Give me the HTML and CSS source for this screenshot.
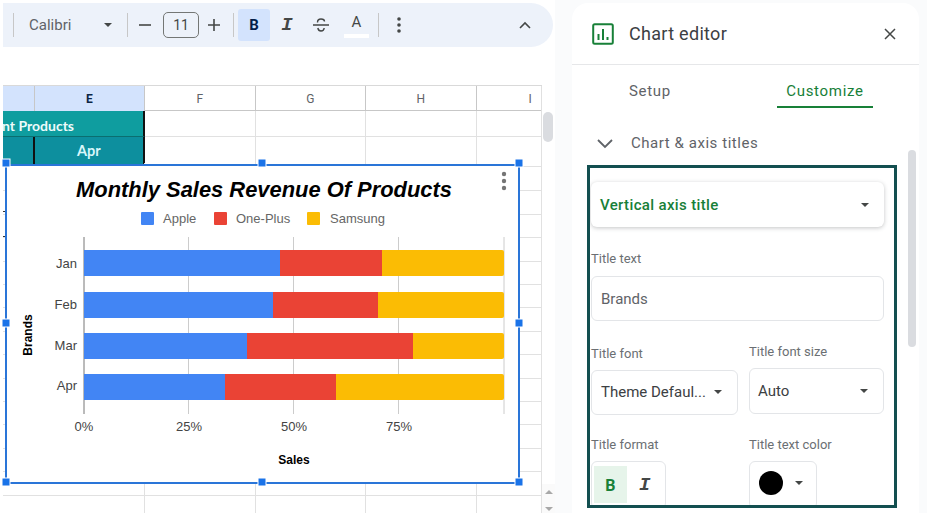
FILE: index.html
```html
<!DOCTYPE html>
<html lang="en">
<head>
  <meta charset="UTF-8">
  <title>Chart editor</title>
  <link rel="stylesheet" href="styles.css">
</head>
<body>
  <div class="sheet">
    <div class="toolbar">
      <span class="tb-sep"></span>
      <div class="tb-font">
        <span>Calibri</span>
        <span class="caret"></span>
      </div>
      <span class="tb-sep"></span>
      <svg class="tb-minus" width="14" height="14" viewBox="0 0 14 14"><path class="tb-line" d="M1 7h12"/></svg>
      <div class="tb-size">11</div>
      <svg class="tb-plus" width="14" height="14" viewBox="0 0 14 14"><path class="tb-line" d="M1 7h12M7 1v12"/></svg>
      <span class="tb-sep tb-sep-b"></span>
      <div class="tb-bold">B</div>
      <div class="tb-italic">I</div>
      <svg class="tb-strike" width="18" height="18" viewBox="0 0 18 18"><path class="tb-line-thin" d="M1 9h16M5.5 6.5C5.5 4 7 3 9 3s3.5 1 3.5 2.5M5.8 12c.4 2 1.6 3 3.2 3s3-1 3.2-3"/></svg>
      <div class="tb-color">A</div>
      <span class="tb-sep tb-sep-c"></span>
      <svg class="tb-dots" width="4" height="16" viewBox="0 0 4 16"><circle cx="2" cy="2" r="1.8"/><circle cx="2" cy="8" r="1.8"/><circle cx="2" cy="14" r="1.8"/></svg>
      <svg class="tb-collapse" width="14" height="9" viewBox="0 0 14 9"><path class="tb-line" d="M2 7l5-5 5 5"/></svg>
    </div>

    <div class="grid-wrap">
      <div class="grid">
        <div class="grid-head">
          <div class="col-d selected"></div>
          <div class="col selected">E</div>
          <div class="col">F</div>
          <div class="col">G</div>
          <div class="col">H</div>
          <div class="col-i">I</div>
        </div>
        <div class="grid-row">
          <div class="merged"><span>nt Products</span></div>
          <div class="cell"></div>
          <div class="cell"></div>
          <div class="cell"></div>
          <div class="cell-i"></div>
        </div>
        <div class="grid-row">
          <div class="teal-d"></div>
          <div class="teal-e">Apr</div>
          <div class="cell"></div>
          <div class="cell"></div>
          <div class="cell"></div>
          <div class="cell-i"></div>
        </div>
        <div class="grid-fill"></div>
      </div>
      <div class="vscroll">
        <div class="vthumb"></div>
        <div class="varrows">
          <span class="arrow-up"></span>
          <span class="arrow-down"></span>
        </div>
      </div>
    </div>

    <!-- chart sits over the cells, svg uses page coordinates -->
    <div class="chart">
      <svg class="chart-svg" width="511" height="316" viewBox="7 166 511 316">
        <text class="c-title" x="264" y="197">Monthly Sales Revenue Of Products</text>

        <rect class="s-blue" x="141" y="212" width="13" height="13" rx="1"/>
        <text class="c-legend" x="163" y="223">Apple</text>
        <rect class="s-red" x="214" y="212" width="13" height="13" rx="1"/>
        <text class="c-legend" x="236" y="223">One-Plus</text>
        <rect class="s-yellow" x="307" y="212" width="13" height="13" rx="1"/>
        <text class="c-legend" x="330" y="223">Samsung</text>

        <path class="c-grid" d="M188.5 237V414M293.5 237V414M398.5 237V414M504 237V414"/>
        <path class="c-axis" d="M84 237V414"/>

        <rect class="s-yellow" x="378" y="250" width="126" height="26" rx="2"/>
        <rect class="s-red" x="280" y="250" width="102" height="26"/>
        <rect class="s-blue" x="84" y="250" width="196" height="26"/>

        <rect class="s-yellow" x="374" y="292" width="130" height="26" rx="2"/>
        <rect class="s-red" x="273" y="292" width="105" height="26"/>
        <rect class="s-blue" x="84" y="292" width="189" height="26"/>

        <rect class="s-yellow" x="408" y="333" width="96" height="26" rx="2"/>
        <rect class="s-red" x="247" y="333" width="166" height="26"/>
        <rect class="s-blue" x="84" y="333" width="163" height="26"/>

        <rect class="s-yellow" x="331" y="374" width="173" height="26" rx="2"/>
        <rect class="s-red" x="225" y="374" width="111" height="26"/>
        <rect class="s-blue" x="84" y="374" width="141" height="26"/>

        <text class="c-label c-end" x="77" y="268">Jan</text>
        <text class="c-label c-end" x="77" y="309">Feb</text>
        <text class="c-label c-end" x="77" y="350">Mar</text>
        <text class="c-label c-end" x="77" y="390">Apr</text>

        <text class="c-label c-mid" x="84" y="431">0%</text>
        <text class="c-label c-mid" x="189" y="431">25%</text>
        <text class="c-label c-mid" x="294" y="431">50%</text>
        <text class="c-label c-mid" x="399" y="431">75%</text>

        <text class="c-axis-title" x="294" y="464">Sales</text>
        <text class="c-axis-title" transform="translate(32 335) rotate(-90)">Brands</text>

        <circle class="c-dot" cx="504" cy="174" r="2.2"/>
        <circle class="c-dot" cx="504" cy="181" r="2.2"/>
        <circle class="c-dot" cx="504" cy="188" r="2.2"/>

        <rect class="c-handle" x="2" y="159" width="8" height="8"/>
        <rect class="c-handle" x="258" y="159" width="8" height="8"/>
        <rect class="c-handle" x="515" y="159" width="8" height="8"/>
        <rect class="c-handle" x="2" y="319" width="8" height="8"/>
        <rect class="c-handle" x="515" y="319" width="8" height="8"/>
        <rect class="c-handle" x="2" y="478" width="8" height="8"/>
        <rect class="c-handle" x="258" y="478" width="8" height="8"/>
        <rect class="c-handle" x="515" y="478" width="8" height="8"/>
      </svg>
    </div>
  </div>

  <div class="panel">
    <div class="panel-head">
      <svg class="panel-icon" width="22" height="22" viewBox="0 0 22 22"><rect class="icon-box" x="1.2" y="1.2" width="19.6" height="19.6" rx="1.5"/><path class="icon-bars" d="M6.5 11v6M11 6v11M15.5 14v3"/></svg>
      <div class="panel-title">Chart editor</div>
      <svg class="panel-close" width="12" height="12" viewBox="0 0 12 12"><path d="M1 1l10 10M11 1L1 11"/></svg>
    </div>
    <div class="tabs">
      <div class="tab">Setup</div>
      <div class="tab active">Customize</div>
    </div>
    <div class="section-head">
      <svg class="section-chevron" width="18" height="11" viewBox="0 0 18 11"><path d="M2 2l7 7 7-7"/></svg>
      <span>Chart &amp; axis titles</span>
    </div>
    <div class="panel-scroll"></div>

    <div class="box">
      <div class="dropdown">
        <span>Vertical axis title</span>
        <span class="caret"></span>
      </div>

      <div class="label label-text">Title text</div>
      <div class="input">Brands</div>

      <div class="row row-font">
        <div class="field field-left">
          <div class="label">Title font</div>
          <div class="select">
            <span>Theme Defaul...</span>
            <span class="caret"></span>
          </div>
        </div>
        <div class="field field-right">
          <div class="label">Title font size</div>
          <div class="select select-size">
            <span>Auto</span>
            <span class="caret"></span>
          </div>
        </div>
      </div>

      <div class="row row-format">
        <div class="field field-left">
          <div class="label">Title format</div>
          <div class="format-group">
            <div class="format-b">B</div>
            <div class="format-i">I</div>
          </div>
        </div>
        <div class="field field-right">
          <div class="label">Title text color</div>
          <div class="color-btn">
            <span class="color-dot"></span>
            <span class="caret"></span>
          </div>
        </div>
      </div>
    </div>
  </div>
</body>
</html>
```

FILE: styles.css
```css
* {
  box-sizing: border-box;
}
html, body {
  margin: 0;
  height: 513px;
  overflow: hidden;
}
body {
  display: flex;
  font-family: Roboto, "Liberation Sans", sans-serif;
  background-color: #fafbfc;
  color: #444746;
}
.caret {
  display: inline-block;
  width: 0;
  height: 0;
  border-left: 4.5px solid transparent;
  border-right: 4.5px solid transparent;
  border-top: 4.5px solid #444746;
}

/* sheet side */
.sheet {
  position: relative;
  width: 555px;
  flex: none;
  background-color: #fff;
}
.toolbar {
  display: flex;
  align-items: center;
  height: 44px;
  margin: 3px 2px 0 3px;
  padding-left: 10px;
  background-color: #edf2fa;
  border-radius: 0 22px 22px 0;
}
.tb-sep {
  width: 1px;
  height: 24px;
  flex: none;
  background-color: #c7c7c7;
}
.tb-font {
  display: flex;
  align-items: center;
  justify-content: space-between;
  width: 113px;
  padding: 0 15px 0 15px;
  font-size: 15px;
  color: #5f6368;
}
.tb-line {
  fill: none;
  stroke: #444746;
  stroke-width: 1.6;
}
.tb-line-thin {
  fill: none;
  stroke: #444746;
  stroke-width: 1.4;
}
.tb-minus {
  margin-left: 10px;
}
.tb-size {
  width: 36px;
  height: 26px;
  margin-left: 11px;
  border: 1px solid #747775;
  border-radius: 5px;
  font-size: 14px;
  line-height: 24px;
  text-align: center;
}
.tb-plus {
  margin-left: 8px;
}
.tb-sep-b {
  margin-left: 12px;
}
.tb-bold {
  width: 32px;
  height: 32px;
  margin-left: 4px;
  background-color: #d3e3fd;
  border-radius: 3px;
  font-size: 15px;
  font-weight: 700;
  line-height: 32px;
  text-align: center;
  color: #041e49;
}
.tb-italic, .format-i {
  font-family: "Liberation Mono", monospace;
  font-style: italic;
  font-weight: 700;
  text-align: center;
}
.tb-italic {
  width: 18px;
  margin-left: 8px;
  font-size: 19px;
}
.tb-strike {
  margin-left: 16px;
}
.tb-color {
  width: 25px;
  height: 26px;
  margin-left: 14px;
  border-bottom: 4px solid #fff;
  font-size: 15px;
  line-height: 20px;
  text-align: center;
}
.tb-sep-c {
  margin-left: 9px;
}
.tb-dots {
  margin-left: 18px;
  fill: #444746;
}
.tb-collapse {
  margin-left: 117px;
}

/* cells */
.grid-wrap {
  display: flex;
  height: 428px;
  margin-top: 38px;
}
.grid {
  width: 542px;
  padding-left: 3px;
  overflow: hidden;
}
.grid-head, .grid-row {
  display: grid;
  grid-template-columns: 31.5px 110.5px 110.5px 110.5px 110.5px 65.5px;
  height: 26px;
}
.grid-head {
  border-top: 1px solid #d9d9d9;
  border-bottom: 1px solid #c7c7c7;
  font-size: 12px;
  line-height: 26px;
  text-align: center;
  color: #5f6368;
}
.col {
  border-right: 1px solid #c7c7c7;
}
.col-d {
  border-right: 1px solid #c7c7c7;
}
.col-i {
  padding-left: 43px;
  border-right: 1px solid #e0e0e0;
}
.selected {
  background-color: #d3e3fd;
  font-weight: 700;
  color: #0b2545;
}
.cell {
  border-right: 1px solid #e1e1e1;
  border-bottom: 1px solid #e1e1e1;
}
.cell-i {
  border-right: 1px solid #e1e1e1;
  border-bottom: 1px solid #e1e1e1;
}
.merged {
  grid-column: span 2;
  display: flex;
  justify-content: flex-end;
  padding-right: 69px;
  background-color: #0f9d9f;
  border-right: 2px solid #111;
  border-bottom: 1px solid #0b6e70;
  font-family: Lato, sans-serif;
  font-size: 14px;
  font-weight: 700;
  line-height: 30px;
  white-space: nowrap;
  overflow: hidden;
  color: #eefbfb;
}
.teal-d, .teal-e {
  background-color: #0d8f9e;
  border-right: 2px solid #111;
  border-bottom: 2px solid #111;
}
.teal-e {
  font-family: Lato, sans-serif;
  font-size: 14.5px;
  font-weight: 700;
  line-height: 28px;
  text-align: center;
  color: #d8f6fa;
}
.grid-fill {
  position: relative;
  height: 350px;
  background-image:
    linear-gradient(#e1e1e1, #e1e1e1),
    linear-gradient(#e1e1e1, #e1e1e1),
    linear-gradient(#e1e1e1, #e1e1e1),
    linear-gradient(#e1e1e1, #e1e1e1),
    linear-gradient(#e1e1e1, #e1e1e1),
    repeating-linear-gradient(#fff 0, #fff 22.4px, #e1e1e1 22.4px, #e1e1e1 23.4px);
  background-size: 1px 100%, 1px 100%, 1px 100%, 1px 100%, 1px 100%, 100% 100%;
  background-position: 141px 0, 252px 0, 362px 0, 473px 0, 538px 0, 0 5px;
  background-repeat: no-repeat;
}
.grid-fill::before {
  content: "";
  position: absolute;
  left: 0;
  top: 24px;
  width: 3px;
  height: 51px;
  background-image: repeating-linear-gradient(transparent 0, transparent 24px, #333 24px, #333 25px);
}

.vscroll {
  display: flex;
  flex-direction: column;
  width: 13px;
  padding-top: 27px;
}
.vthumb {
  width: 10px;
  height: 30px;
  margin-left: 1px;
  background-color: #dadce0;
  border-radius: 5px;
}
.varrows {
  display: flex;
  flex-direction: column;
  align-items: center;
  gap: 13px;
  height: 29px;
  margin-top: auto;
  padding-top: 6px;
  background-color: #fafafa;
}
.arrow-up, .arrow-down {
  width: 0;
  height: 0;
  border-left: 4px solid transparent;
  border-right: 4px solid transparent;
}
.arrow-up {
  border-bottom: 4px solid #a8a8a8;
}
.arrow-down {
  border-top: 4px solid #a8a8a8;
}

/* chart */
.chart {
  position: absolute;
  left: 5px;
  top: 164px;
  width: 515px;
  height: 320px;
  background-color: #fff;
  border: 2px solid #2a75d8;
}
.chart-svg {
  display: block;
  overflow: visible;
  font-family: "Liberation Sans", Arial, sans-serif;
}
.c-title {
  font-size: 21.9px;
  font-weight: 700;
  font-style: italic;
  text-anchor: middle;
  fill: #000;
}
.c-legend {
  font-size: 13px;
  fill: #666;
}
.c-label {
  font-size: 13px;
  fill: #444;
}
.c-end {
  text-anchor: end;
}
.c-mid {
  text-anchor: middle;
}
.c-axis-title {
  font-size: 12px;
  font-weight: 700;
  text-anchor: middle;
  fill: #000;
}
.c-grid {
  fill: none;
  stroke: #ccc;
  stroke-width: 1;
}
.c-axis {
  fill: none;
  stroke: #777;
  stroke-width: 1;
}
.s-blue {
  fill: #4285f4;
}
.s-red {
  fill: #ea4335;
}
.s-yellow {
  fill: #fbbc04;
}
.c-dot {
  fill: #757575;
}
.c-handle {
  fill: #1a73e8;
  stroke: #fff;
  stroke-width: 1;
}

/* chart editor */
.panel {
  position: relative;
  width: 347px;
  height: 510px;
  margin: 3px 0 0 17px;
  flex: none;
  background-color: #fff;
  border-radius: 16px 16px 0 0;
}
.panel-head {
  display: flex;
  align-items: center;
  height: 62px;
  padding: 1px 23px 1px 20px;
  border-bottom: 1px solid #e6e7e9;
}
.panel-icon {
  flex: none;
}
.icon-box {
  fill: none;
  stroke: #188038;
  stroke-width: 2;
}
.icon-bars {
  fill: none;
  stroke: #188038;
  stroke-width: 2;
}
.panel-title {
  margin-left: 15px;
  font-size: 18px;
  letter-spacing: 0.3px;
  color: #3c4043;
}
.panel-close {
  margin-left: auto;
  fill: none;
  stroke: #444746;
  stroke-width: 1.5;
}
.tabs {
  display: flex;
  height: 43px;
  padding-left: 57px;
}
.tab {
  padding-top: 17px;
  font-size: 15px;
  letter-spacing: 0.7px;
  color: #5f6368;
}
.tab.active {
  width: 96px;
  height: 43px;
  margin-left: 106px;
  border-bottom: 2px solid #188038;
  text-align: center;
  color: #188038;
}
.section-head {
  display: flex;
  align-items: center;
  height: 57px;
  padding: 13px 0 0 24px;
  font-size: 15px;
  letter-spacing: 0.55px;
  color: #5f6368;
}
.section-head span {
  margin-left: 17px;
}
.section-chevron {
  fill: none;
  stroke: #5f6368;
  stroke-width: 1.8;
}
.panel-scroll {
  position: absolute;
  left: 336px;
  top: 147px;
  width: 8px;
  height: 197px;
  background-color: #dadce0;
  border-radius: 4px;
}
.box {
  width: 310px;
  height: 343px;
  margin-left: 15px;
  padding: 14px 10px 0 1px;
  border: 3px solid #134f50;
  overflow: hidden;
}
.dropdown {
  display: flex;
  align-items: center;
  justify-content: space-between;
  height: 45px;
  padding: 0 15px 0 9px;
  background-color: #fff;
  border-radius: 6px;
  box-shadow: 0 1px 4px rgba(60, 64, 67, 0.3);
  font-size: 15px;
  font-weight: 500;
  letter-spacing: 0.35px;
  color: #188038;
}
.label {
  height: 16px;
  font-size: 13px;
  line-height: 18px;
  color: #6b6f73;
}
.label-text {
  margin-top: 23px;
}
.input {
  height: 45px;
  margin-top: 10px;
  padding-left: 9px;
  border: 1px solid #e3e5e8;
  border-radius: 6px;
  font-size: 15px;
  line-height: 45px;
  color: #5f6368;
}
.row {
  display: flex;
  gap: 11px;
}
.row-font {
  margin-top: 22px;
}
.row-format {
  margin-top: 21px;
}
.field-left {
  width: 147px;
  flex: none;
}
.field-right {
  width: 135px;
  flex: none;
}
.row-font .field-left {
  padding-top: 2px;
}
.select {
  display: flex;
  align-items: center;
  justify-content: space-between;
  height: 45px;
  margin-top: 9px;
  padding: 0 15px 1px 9px;
  border: 1px solid #e3e5e8;
  border-radius: 6px;
  font-size: 15px;
  color: #3c4043;
}
.select-size {
  height: 46px;
  padding-left: 8px;
  padding-right: 15px;
}
.format-group {
  display: flex;
  width: 75px;
  height: 48px;
  margin-top: 9px;
  padding: 4px 2px;
  border: 1px solid #e3e5e8;
  border-radius: 6px;
}
.format-b {
  width: 33px;
  height: 37px;
  background-color: #e6f4ea;
  font-size: 16px;
  font-weight: 700;
  line-height: 39px;
  text-align: center;
  color: #188038;
}
.format-i {
  width: 37px;
  font-size: 19px;
  line-height: 39px;
  color: #444746;
}
.color-btn {
  display: flex;
  align-items: center;
  gap: 12px;
  width: 68px;
  height: 48px;
  margin-top: 9px;
  padding: 0 0 4px 9px;
  border: 1px solid #e3e5e8;
  border-radius: 6px;
}
.color-dot {
  width: 24px;
  height: 24px;
  background-color: #000;
  border-radius: 50%;
}
```
